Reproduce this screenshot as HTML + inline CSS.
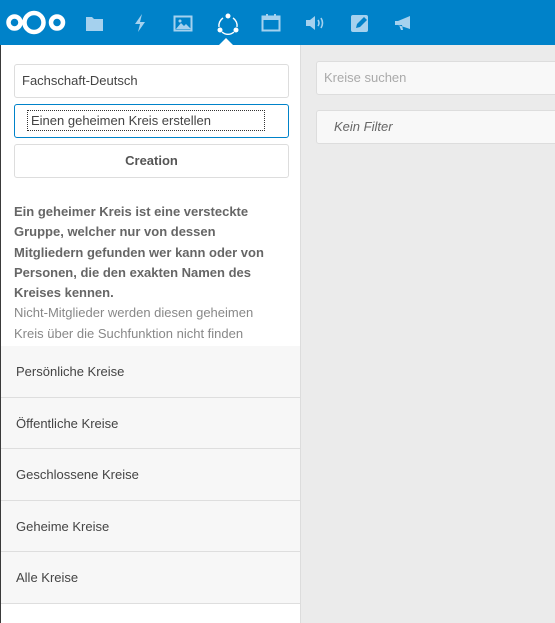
<!DOCTYPE html>
<html><head><meta charset="utf-8"><style>
*{box-sizing:border-box;margin:0;padding:0}
body{width:555px;height:623px;overflow:hidden;font-family:"Liberation Sans",sans-serif;background:#ebebeb;position:relative}
#hdr{position:absolute;left:0;top:0;width:555px;height:45px;background:#0082c9}
#hdr svg{position:absolute}
#left{position:absolute;left:0;top:45px;width:301px;height:578px;background:#fff;border-left:1px solid #3a3a3a;border-right:1px solid #dcdcdc}
.inp{position:absolute;left:13px;width:275px;height:34px;border:1px solid #ddd;border-radius:3px;background:#fff;font-size:13px;color:#444;padding:0 7px;line-height:32px}
.txt{position:absolute;left:13px;top:157px;width:290px;font-size:13px;line-height:20.3px;color:#666;white-space:nowrap}
.row{position:absolute;left:0;width:299px;height:51.5px;background:#f7f7f7;border-bottom:1px solid #dedede;font-size:13px;color:#444;padding-left:15px;line-height:51px}
.rin{position:absolute;left:316px;width:260px;height:34px;border:1px solid #ddd;border-radius:3px;background:#f8f8f8;font-size:13px;padding-left:7px;line-height:32px}
</style></head><body>
<div id="hdr">
<svg width="70" height="45" style="left:0;top:0"><g fill="none" stroke="#fff" stroke-width="4.5"><circle cx="14.5" cy="22.5" r="6"/><circle cx="34" cy="22.5" r="9.5"/><circle cx="57" cy="22.5" r="6"/></g></svg>
<svg width="20" height="20" style="top:14px;left:85px"><path d="M1 3h6l2 2h9v12H1z" fill="#a5d1ee"/></svg>
<svg width="20" height="20" style="left:130px;top:13px"><path d="M12 1L5 11h5l-2 8 7-10h-5z" fill="#a5d1ee"/></svg>
<svg width="20" height="20" style="left:173px;top:14px"><rect x="1.5" y="2.5" width="17" height="14" fill="none" stroke="#a5d1ee" stroke-width="2"/><path d="M3 15l5-6 3 3 2-2 5 5z" fill="#a5d1ee"/><circle cx="7" cy="7" r="1.5" fill="#a5d1ee"/></svg>
<svg width="24" height="26" style="left:216px;top:12px"><path d="M7 6A9 9 0 0 0 3 15M17 6A9 9 0 0 1 21 15M6 20A9 9 0 0 0 18 20" fill="none" stroke="#fff" stroke-width="1.4"/><circle cx="12" cy="4" r="2.5" fill="#fff"/><circle cx="4" cy="18" r="2.5" fill="#fff"/><circle cx="20" cy="18" r="2.5" fill="#fff"/></svg>
<svg width="14" height="8" style="left:219px;top:37px"><path d="M0 8L7 1L14 8z" fill="#fff"/></svg>
<svg width="20" height="20" style="left:261px;top:13px"><rect x="1.5" y="3.5" width="17" height="14" fill="none" stroke="#a5d1ee" stroke-width="2"/><rect x="1" y="3" width="18" height="4" fill="#a5d1ee"/><rect x="5" y="1" width="2" height="4" fill="#a5d1ee"/><rect x="13" y="1" width="2" height="4" fill="#a5d1ee"/></svg>
<svg width="22" height="20" style="left:305px;top:13px"><path d="M1 7h4l5-4v14l-5-4H1z" fill="#a5d1ee"/><path d="M13 7q2 3 0 6M16 5q3 5 0 10" fill="none" stroke="#a5d1ee" stroke-width="1.6"/></svg>
<svg width="20" height="20" style="left:350px;top:13px"><rect x="1" y="2" width="17" height="17" rx="2" fill="#a5d1ee"/><path d="M6 15l1-4 7-7 3 3-7 7z" fill="#0082c9"/></svg>
<svg width="22" height="20" style="left:393px;top:13px"><path d="M2 8h3l12-5v13L5 12H2z M6 12l2 5h2l-1-5z" fill="#a5d1ee"/></svg>
</div>
<div id="left">
<div class="inp" style="top:19px">Fachschaft-Deutsch</div>
<div class="inp" style="top:59px;border-color:#0082c9;padding:0"><span style="display:inline-block;margin:5px 0 0 12px;width:238px;height:21px;border:1px dotted #333;line-height:19px;padding-left:3px">Einen geheimen Kreis erstellen</span></div>
<div class="inp" style="top:99px;text-align:center;font-weight:bold;color:#555">Creation</div>
<div class="txt"><b>Ein geheimer Kreis ist eine versteckte<br>Gruppe, welcher nur von dessen<br>Mitgliedern gefunden wer kann oder von<br>Personen, die den exakten Namen des<br>Kreises kennen.</b><br><span style="color:#888">Nicht-Mitglieder werden diesen geheimen<br>Kreis über die Suchfunktion nicht finden</span></div>
<div class="row" style="top:301px">Persönliche Kreise</div>
<div class="row" style="top:352.5px">Öffentliche Kreise</div>
<div class="row" style="top:404px">Geschlossene Kreise</div>
<div class="row" style="top:455.5px">Geheime Kreise</div>
<div class="row" style="top:507px">Alle Kreise</div>
</div>
<div class="rin" style="top:61px;color:#aaa">Kreise suchen</div>
<div class="rin" style="top:110px;color:#666;font-style:italic;padding-left:17px">Kein Filter</div>
</body></html>
